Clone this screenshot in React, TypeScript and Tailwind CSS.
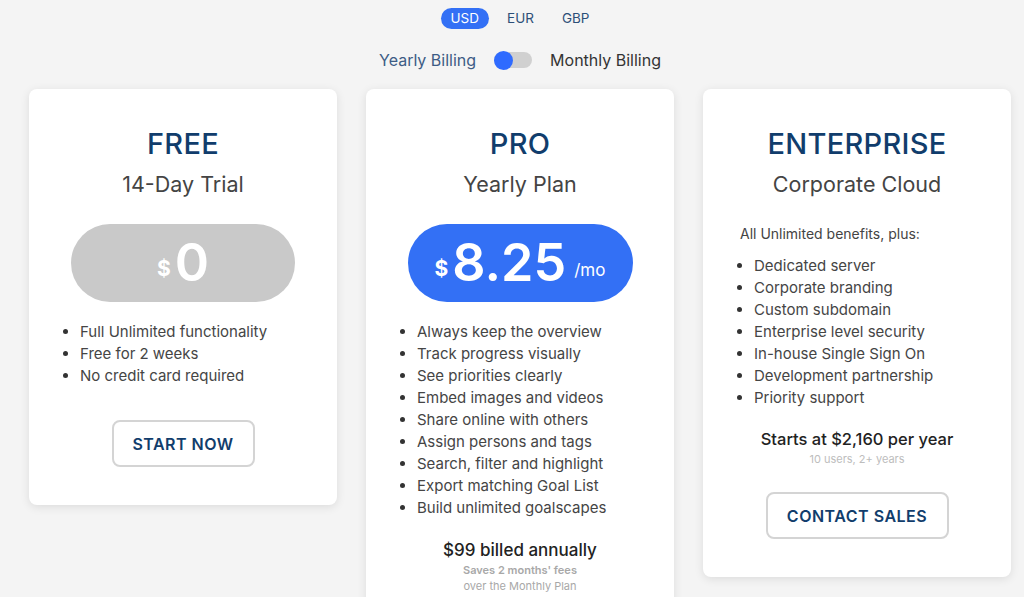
import React from 'react';

const freeFeatures = ['Full Unlimited functionality', 'Free for 2 weeks', 'No credit card required'];

const proFeatures = [
  'Always keep the overview',
  'Track progress visually',
  'See priorities clearly',
  'Embed images and videos',
  'Share online with others',
  'Assign persons and tags',
  'Search, filter and highlight',
  'Export matching Goal List',
  'Build unlimited goalscapes',
];

const enterpriseFeatures = [
  'Dedicated server',
  'Corporate branding',
  'Custom subdomain',
  'Enterprise level security',
  'In-house Single Sign On',
  'Development partnership',
  'Priority support',
];

function FeatureList({ items }: { items: string[] }) {
  return (
    <ul className="list-disc self-stretch pl-[51px] pr-4 text-left text-[15px] leading-[22px] text-[#454545] marker:text-[#333]">
      {items.map((item) => (
        <li key={item}>{item}</li>
      ))}
    </ul>
  );
}

function PlanHeader({ title, subtitle }: { title: string; subtitle: string }) {
  return (
    <>
      <h2 className="mt-px text-[29px] leading-[36px] font-medium tracking-[0.3px] text-[#113d6c]">{title}</h2>
      <p className="mt-[8px] text-[21.5px] leading-[28px] text-[#444]">{subtitle}</p>
    </>
  );
}

function OutlineButton({ label, width }: { label: string; width: string }) {
  return (
    <button
      className={`${width} h-[47px] rounded-lg border-2 border-[#d4d4d4] bg-white text-[16px] font-semibold tracking-[0.5px] text-[#113d6c]`}
    >
      {label}
    </button>
  );
}

export default function App() {
  return (
    <div className="h-[597px] overflow-hidden bg-[#f4f4f4] pl-4 font-['Inter',sans-serif]">
      <div className="flex justify-center gap-2 pt-2">
        <span className="rounded-full bg-[#3370f5] px-[10px] text-[13.5px] leading-[21px] text-white">USD</span>
        <span className="rounded-full px-[10px] text-[13.5px] leading-[21px] text-[#2d4f78]">EUR</span>
        <span className="rounded-full px-[10px] text-[13.5px] leading-[21px] text-[#2d4f78]">GBP</span>
      </div>

      <div className="mt-[19px] flex items-center justify-center">
        <span className="text-[16px] leading-[24px] text-[#3d5c85]">Yearly Billing</span>
        <div className="relative mx-[18px] h-4 w-[38px] rounded-full bg-[#d0d0d0]">
          <div className="absolute -top-[1.5px] left-0 h-[19px] w-[19px] rounded-full bg-[#2f6bff]" />
        </div>
        <span className="text-[16px] leading-[24px] text-[#333]">Monthly Billing</span>
      </div>

      <div className="mt-[17px] flex items-start justify-center gap-[29px]">
        {/* FREE */}
        <div className="flex w-[308px] flex-col items-center rounded-lg bg-white pt-9 pb-[38px] shadow-[0_2px_10px_rgba(0,0,0,0.10)]">
          <PlanHeader title="FREE" subtitle="14-Day Trial" />
          <div className="mt-[26px] flex h-[78px] w-[224px] items-center justify-center rounded-full bg-[#c9c9c9] text-white">
            <span className="mt-3 mr-1 text-[21px] font-bold">$</span>
            <span className="text-[52px] leading-none font-semibold">0</span>
          </div>
          <div className="mt-[19px] self-stretch">
            <FeatureList items={freeFeatures} />
          </div>
          <div className="mt-[33px]">
            <OutlineButton label="START NOW" width="w-[143px]" />
          </div>
        </div>

        {/* PRO */}
        <div className="flex w-[308px] flex-col items-center rounded-lg bg-white pt-9 pb-[38px] shadow-[0_2px_10px_rgba(0,0,0,0.10)]">
          <PlanHeader title="PRO" subtitle="Yearly Plan" />
          <div className="mt-[26px] flex h-[78px] w-[225px] items-center justify-center rounded-full bg-[#3370f5] text-white">
            <span className="mt-3 mr-1 text-[21px] font-bold">$</span>
            <span className="text-[52px] leading-none font-semibold">8.25</span>
            <span className="mt-4 ml-2 text-[17px]">/mo</span>
          </div>
          <div className="mt-[19px] self-stretch">
            <FeatureList items={proFeatures} />
          </div>
          <p className="mt-[19px] text-[17px] leading-[24px] font-medium text-[#222]">$99 billed annually</p>
          <p className="text-[11px] leading-4 font-semibold text-[#a8a8a8]">Saves 2 months' fees</p>
          <p className="text-[11px] leading-4 text-[#a8a8a8]">over the Monthly Plan</p>
        </div>

        {/* ENTERPRISE */}
        <div className="flex w-[308px] flex-col items-center rounded-lg bg-white pt-9 pb-[38px] shadow-[0_2px_10px_rgba(0,0,0,0.10)]">
          <PlanHeader title="ENTERPRISE" subtitle="Corporate Cloud" />
          <p className="mt-[26px] self-stretch pl-[37px] text-[14px] leading-5 text-[#444]">All Unlimited benefits, plus:</p>
          <div className="mt-[11px] self-stretch">
            <FeatureList items={enterpriseFeatures} />
          </div>
          <p className="mt-[18px] text-[16.5px] leading-[24px] font-medium text-[#222]">Starts at $2,160 per year</p>
          <p className="text-[11px] leading-4 text-[#bdbdbd]">10 users, 2+ years</p>
          <div className="mt-[25px]">
            <OutlineButton label="CONTACT SALES" width="w-[183px]" />
          </div>
        </div>
      </div>
    </div>
  );
}
